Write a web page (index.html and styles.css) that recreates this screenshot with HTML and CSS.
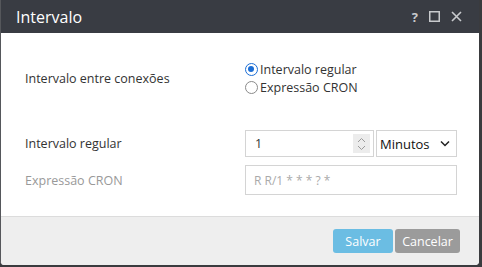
FILE: index.html
```html
<!DOCTYPE html>
<html lang="pt">
<head>
<meta charset="utf-8">
<link rel="stylesheet" href="styles.css">
</head>
<body>
<div class="dialog">
  <div class="header">
    <span class="title">Intervalo</span>
    <div class="tools">
      <span class="help">?</span>
      <svg class="ico" width="11" height="11" viewBox="0 0 11 11"><rect x="0.75" y="0.75" width="9.5" height="9.5" fill="none" stroke="#c8cacd" stroke-width="1.5"/></svg>
      <svg class="ico" width="11" height="11" viewBox="0 0 11 11"><path d="M1 1L10 10M10 1L1 10" stroke="#c8cacd" stroke-width="1.6"/></svg>
    </div>
  </div>
  <div class="content">
    <div class="row first">
      <div class="label">Intervalo entre conexões</div>
      <div class="field radios">
        <label class="radio"><span class="dot on"></span>Intervalo regular</label>
        <label class="radio"><span class="dot"></span>Expressão CRON</label>
      </div>
    </div>
    <div class="row second">
      <div class="label">Intervalo regular</div>
      <div class="field inline">
        <div class="num">
          <span class="val">1</span>
          <span class="spin">
            <svg width="9" height="14" viewBox="0 0 9 14"><path d="M1 5L4.5 1.5L8 5M1 9L4.5 12.5L8 9" fill="none" stroke="#9a9a9a" stroke-width="1"/></svg>
          </span>
        </div>
        <div class="select">
          <span>Minutos</span>
          <svg width="10" height="7" viewBox="0 0 10 7"><path d="M1 1.5L5 5.5L9 1.5" fill="none" stroke="#222" stroke-width="1.5"/></svg>
        </div>
      </div>
    </div>
    <div class="row third">
      <div class="label muted">Expressão CRON</div>
      <div class="field">
        <div class="text">R R/1 * * * ? *</div>
      </div>
    </div>
  </div>
  <div class="footer">
    <button class="btn save">Salvar</button>
    <button class="btn cancel">Cancelar</button>
  </div>
</div>
</body>
</html>
```
FILE: styles.css
```css
* { box-sizing: border-box; }
html, body { margin: 0; padding: 0; }
body {
  width: 482px;
  height: 267px;
  background: #3a3b3e;
  font-family: "Open Sans", "Noto Sans", sans-serif;
  font-size: 12.5px;
  color: #333;
  overflow: hidden;
}
.dialog {
  width: 479px;
  height: 265px;
  border-left: 1px solid #55575b;
  border-radius: 0 0 4px 4px;
  overflow: hidden;
  display: flex;
  flex-direction: column;
  background: #fff;
}
.header {
  height: 33px;
  background: #393c43;
  color: #fff;
  display: flex;
  align-items: center;
  padding: 0 0 0 15px;
}
.title { font-size: 16px; flex: 1; }
.tools {
  display: flex;
  align-items: center;
  gap: 11px;
  padding-right: 17px;
}
.help { font-weight: 700; font-size: 13px; color: #c8cacd; margin-top: 1px; }
.ico { display: block; }
.content {
  flex: 1;
  padding: 27px 0 0 24px;
  border-bottom: 1px solid #dcdcdc;
}
.row { display: flex; align-items: center; }
.label { width: 220px; }
.muted { color: #999; }
.field { width: 212px; }
.radios { display: flex; flex-direction: column; }
.radio { display: flex; align-items: center; height: 18px; gap: 2px; }
.dot {
  width: 13px; height: 13px;
  border-radius: 50%;
  border: 1.5px solid #8a8a8a;
  display: inline-block;
  position: relative;
}
.dot.on { border: 1.5px solid #1c6ed5; }
.dot.on::after {
  content: "";
  position: absolute;
  left: 2px; top: 2px;
  width: 6px; height: 6px;
  border-radius: 50%;
  background: #1c6ed5;
}
.second { margin-top: 34px; }
.inline { display: flex; gap: 2px; }
.num {
  width: 129px; height: 27px;
  border: 1px solid #d4d4d4;
  display: flex; align-items: center;
  padding-left: 9px;
}
.num .val { flex: 1; }
.spin {
  width: 17px; height: 19px;
  background: #ececec;
  display: flex; align-items: center; justify-content: center;
  margin-right: 3px;
}
.spin svg { display: block; }
.select {
  width: 81px; height: 27px;
  border: 1px solid #d4d4d4;
  display: flex; align-items: center; justify-content: space-between;
  padding: 0 6px 0 3px;
  font-size: 13px;
  color: #111;
}
.third { margin-top: 8px; }
.text {
  height: 30px;
  border: 1px solid #d4d4d4;
  display: flex; align-items: center;
  padding-left: 8px;
  color: #aaa;
  font-size: 12px;
}
.footer {
  height: 48px;
  background: #eeeeee;
  display: flex;
  justify-content: flex-end;
  align-items: center;
  gap: 2px;
  padding: 0 19px 0 0;
}
.btn {
  height: 24px;
  border: none;
  border-radius: 3px;
  color: #fff;
  font-family: "Open Sans", "Noto Sans", sans-serif;
  font-size: 12.5px;
  padding: 0;
}
.save { width: 60px; background: #6bbde3; }
.cancel { width: 65px; background: #9b9b9b; }
```
